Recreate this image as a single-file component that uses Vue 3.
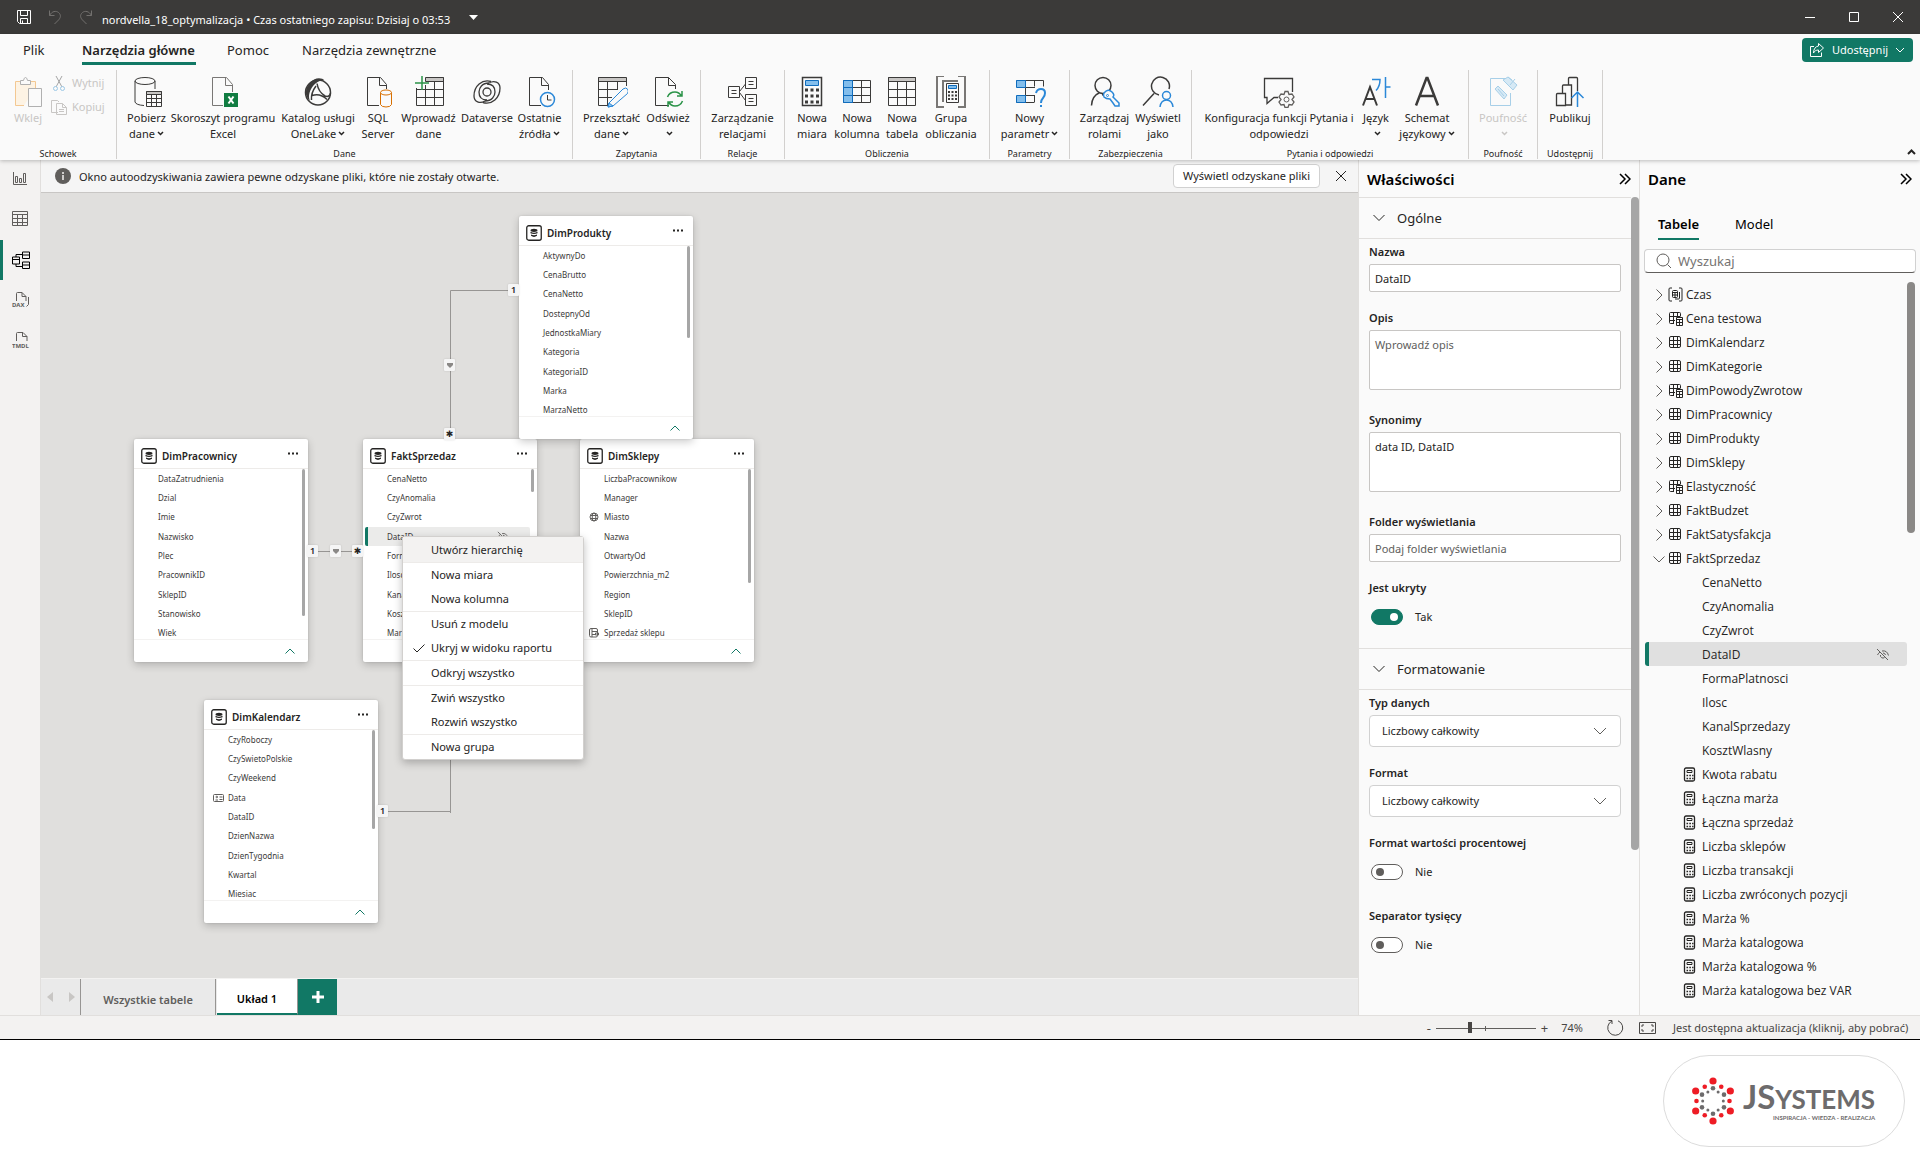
<script setup>
import { ref } from 'vue'

const icons = {
  save: '<path d="M1.5 1.5h13v13h-11l-2-2zM4.5 1.5v5h7v-5M4.5 14.5v-5h7v5M6.5 11.5v3"/>',
  undo: '<path d="M2.500 1.500v5h5M2.500 6.500C5 2 9 1.500 11.500 3.500c3 2.500 2 5.500 0 7.500l-4 4"/>',
  redo: '<path d="M13.500 1.500v5h-5M13.500 6.500C11 2 7 1.500 4.500 3.500c-3 2.500-2 5.500 0 7.500l4 4"/>',
  share: '<path d="M5 4.500H1.500v10h11v-4M9.500 1.500l5 4.500-5 4.500V8C7 8 5.500 9 4.500 11c0-4 2-6.500 5-7z"/>',
  chart: '<path d="M1.500 1v12.500H15M3.500 5.500h2v6h-2zM7.500 7.500h2v4h-2zM11.500 2.500h2v9h-2z"/>',
  grid: '<path d="M.5 .5h15v14H.5zM.5 3.500h15M.5 7.500h15M.5 11.500h15M5.500 3.500v11M10.500 3.500v11"/>',
  model: '<path d="M.5 6h7v7h-7zM.5 8.500h7M10.500 1h7v6.500h-7zM10.500 4h7M10.500 11h7v6.500h-7zM10.500 14h7M4 6V3.500h6.500M4 13v2.500h6.500"/>',
  dax: '<path d="M4.500 10V2.500q0-1 1-1H10l4 4V10M10 1.500v4h4M16.500 6v7.500l-2 2"/><text x="0" y="16">DAX</text>',
  tmdl: '<path d="M4.500 10V2.500q0-1 1-1H11l4 4V10M10.500 1.500v4H15"/><text x="0" y="17">TMDL</text>',
  cut: '<g stroke="#a5a5a5"><path d="M5 1l6 11M11 1L5 12"/></g><g stroke="#9cc8e6"><circle cx="4.500" cy="13.500" r="2"/><circle cx="11.500" cy="13.500" r="2"/></g>',
  copy: '<path d="M7 13.500H.5V1.500h6l1.500 1.500M5.500 4.500h6l4 4v7h-10zM11.500 4.500v4h4M8 10.500h5M8 12.500h5"/>',
  paste: '<g stroke="#f3c892" fill="#fdf3e4"><path d="M12 29.500H3.500V5.500h20V12"/></g><path stroke="#b0b0b0" fill="#fafafa" d="M8.500 8.500v-4h3q.5-3 2-3t2 3h3v4zM16.500 12.500h13v18h-13z"/>',
  database: '<ellipse cx="14" cy="5" rx="10" ry="3.500"/><path d="M4 5v21q1 3 9 3.500M24 5v8"/><path fill="#fafafa" d="M15.500 15.500h15v15h-15z"/><path fill="#c8c6c4" d="M15.500 15.500h15v3h-15z"/><path d="M15.500 22.500h15M15.500 26.500h15M20.500 18.500v12M25.500 18.500v12"/>',
  excel: '<path stroke="#797775" d="M16 29.500H5.500v-28h14l6 7V16M18.500 1.500v8h7"/><path fill="#107c41" stroke="none" d="M17 17h14v14H17z"/><path stroke="#fff" stroke-width="2" d="M21.500 20.500l5 7M26.500 20.500l-5 7"/>',
  onelake: '<circle cx="16" cy="16.500" r="12.500" stroke-width="1.500"/><path fill="#3b3a39" stroke="none" d="M8 7C12 1 20 1 22.500 4.500 18 4 14 6 11 10c-4 5-5 11-3 15C2 20 3 12 8 7z"/><path stroke-width="1.500" d="M15 7.500c1 6 4 10 8 12.500 3 1 5 0 5.500-3M14 10c-3 4-5 9-4.500 14M10 19.500c6-2 11 0 15 4"/>',
  sql: '<path d="M17 29.500H5.500v-28h13l6 7V13M17.500 1.500v8h7"/><g stroke="#d86f00" fill="#fafafa"><path d="M18.500 16.500v12q1 2.500 5.500 2.500t5.500-2.500v-12"/><ellipse cx="24" cy="16.500" rx="5.500" ry="2.500"/></g>',
  enter: '<path fill="#c8c6c4" d="M12.500 1.500h18v4h-18z"/><path d="M3.500 12v17.500h27v-28M4 13.500h26.500M4 21.500h26.500M12.500 9v20.500M21.500 5.500v24"/><path stroke="#2b9348" stroke-width="1.500" d="M9 0v14M2 7h14"/>',
  dataverse: '<g stroke-width="1.300"><circle cx="16" cy="16" r="4"/><path d="M20 5.500C11 3 3 10 3 20c0 6 6 8 11 5M12 26.500C21 29 29 22 29 12c0-6-6-8-11-5M18 7C11 7 8 12 8 16c0 5 3 8 8 8M14 25c7 0 10-5 10-9 0-5-3-8-8-8"/></g>',
  recent: '<path d="M17 29.500H5.500v-28h13l6 7V14M17.500 1.500v8h7"/><g stroke="#2b88d8" fill="#fafafa"><circle cx="23.500" cy="23.500" r="7" stroke-width="1.500"/><path stroke="#3b3a39" d="M23.500 19v5h4"/></g>',
  transform: '<path fill="#c8c6c4" d="M2.500 1.500h28v4h-28z"/><path d="M2.500 1.500v28H14M30.500 5v5M2.500 13.500H22M2.500 21.500H16M11.500 5.500v24M21.500 5.500v8"/><path stroke="#2b88d8" fill="#fafafa" d="M13 27l14-14q3-2 4.500 0t0 4.500L17 30l-5 1z"/><path fill="#8cc4ee" stroke="#2b88d8" d="M13 27l4 3-5 1z"/>',
  refresh: '<path d="M17 29.500H3.500v-28h13l7 7V13M16.500 1.500v8h7"/><path stroke="#2b9348" stroke-width="1.500" d="M15.500 21q2-5 7.500-5 4 0 6.500 4M30 15v5h-5M30.500 25q-2 5-7.500 5-4 0-6.500-4M16 31v-5h5"/>',
  relations: '<path d="M1.500 10.500h11v11h-11zM18.500 1.500h11v11h-11zM18.500 18.500h11v11h-11zM12.500 15.500L18.500 8M12.500 16.500l6 8M4.500 14.500h5M4.500 17.500h5M21.500 5.500h5M21.500 8.500h5M21.500 22.500h5M21.500 25.500h5"/>',
  measure: '<path stroke-width="1.500" d="M6.500 1.500h19v28h-19z"/><path fill="#83beec" stroke="#0f6cbd" d="M9.500 4.500h13v5h-13z"/><path stroke-width="3" stroke-dasharray="3 2.500" d="M9 14h14M9 20h14M9 26h14"/>',
  column: '<path d="M2.500 4.500h27v22h-27zM2.500 11.500h27M2.500 19.500h27M20.500 4.500v22"/><path fill="#83beec" stroke="#0f6cbd" d="M2.500 4.500h9v22h-9zM2.500 11.500h9M2.500 19.500h9"/>',
  table: '<path d="M2.500 1.500h27v28h-27zM2.500 13.500h27M2.500 21.500h27M11.500 5.500v24M20.500 5.500v24"/><path fill="#c8c6c4" d="M2.500 1.500h27v4h-27z"/>',
  calcgroup: '<path stroke-width="2" stroke="#797775" d="M9 0H2v31h7M23 0h7v31h-7"/><path stroke="#797775" stroke-width="2" d="M8 26V5h15"/><path fill="#fafafa" d="M11.500 7.500h12v19h-12z"/><path fill="#83beec" stroke="#0f6cbd" d="M13.500 9.500h8v3h-8z"/><path stroke-width="2" stroke-dasharray="2 1.500" d="M13 16h9M13 19.500h9M13 23h9"/>',
  param: '<path d="M2.500 4.500h27v6M2.500 26.500h18M12 11.500h9M12 19.500h8M11.500 4.500v22M20.500 4.500v6M20.500 19v7"/><path fill="#83beec" stroke="#0f6cbd" d="M2.500 4.500h9v7h-9zM2.500 19.500h9v7h-9z"/><path stroke="#2b88d8" stroke-width="2" d="M22 17q1-4 5-4t4 4q0 3-2 5t-2 5M27 29v2"/>',
  roles: '<circle cx="14" cy="9.500" r="8" stroke-width="1.500"/><path stroke-width="1.500" d="M2.500 29.500Q3 20 10 17M18 17l-5 2"/><path stroke="#2b88d8" fill="#fafafa" stroke-width="1.500" d="M15 17q4-5 8-1 3 3 1 5l6 6v3h-4l-2-3-3-4q-4 0-6-2-1-2 0-4z"/><circle cx="18.500" cy="19.500" r="1" stroke="#2b88d8"/>',
  viewas: '<path stroke-width="1.500" d="M1 29.500l11-12M27 13a9 9 0 1 0-10 6"/><g stroke="#2b88d8" stroke-width="1.500"><circle cx="24.500" cy="19.500" r="4"/><path d="M18 31q1-7 6.500-7t6.500 7"/></g>',
  qa: '<path d="M15 21.500h-4l-7 6v-6H1.500v-19h28V16" stroke-width="1.300"/><path stroke="#605e5c" fill="#fafafa" stroke-width="1.300" d="M22 15.500h3l1 3 3-.5 2 3-2 2.500 2 2.500-2 3-3-.5-1 3h-3l-1-3-3 .5-2-3 2-2.500-2-2.500 2-3 3 .5z"/><circle cx="23.500" cy="23.500" r="2.500" stroke="#605e5c"/>',
  language: '<path stroke-width="2" d="M3 29.500L10 11l7 18.500M5.500 23h9"/><path stroke="#2b88d8" stroke-width="1.500" d="M12 3.500h8q0 7-4 11M25.500 1v21M25.500 11h5"/>',
  schema: '<path stroke-width="2.500" d="M5 29.500L15.500 2h1L27 29.500M8.500 20h15"/>',
  sensitivity: '<g stroke="#a7cfe8"><path d="M18 2.500H3.500v27h20V17"/><path fill="#d6e9f5" d="M8 13l3-3 9 9-3 4zM16 4l5-3 9 8-4 5zM21 1l4 3M28 3l-5 6M11 13l6 7"/></g>',
  publish: '<path d="M2.500 18.500q0-1 1-1h8v12h-9zM8.500 17V10q0-1 1-1h8v20h-6M14.500 9V2.500q0-1 1-1h7q1 0 1 1V15" stroke-width="1.300"/><path stroke="#2b88d8" stroke-width="1.500" d="M23.500 31V16M17.500 22l6-6 6 6"/>',
  tree: '<rect x="1.500" y="1.500" width="11" height="11" rx="1.500"/><path d="M5.500 1.500v11M9.500 1.500v11M1.500 5.500h11M1.500 9.500h11"/>',
  treecalc: '<path d="M6 12.500H2.500q-1 0-1-1v-9q0-1 1-1h9q1 0 1 1V5M5.500 1.500v11M9.500 1.500V5M1.500 5.500h11M1.500 9.500H7"/><path fill="#fafafa" d="M8.500 6.500h6v8h-6z"/><path d="M8.500 8.500h6M8.500 11.500h6M11.500 8.500v6"/>',
  group: '<path d="M4 1H2Q1 1 1 2v11q0 1 1 1h2M11 1h2q1 0 1 1v11q0 1-1 1h-2"/><rect x="4.500" y="3.500" width="5" height="7" rx="1"/><path d="M4.500 5.500h5M4.500 8h5M7 5.500v5M11.500 5v6q0 1-1 1H7"/>',
  calc: '<rect x="1.500" y="1" width="10" height="13" rx="1.500" stroke-width="1.300"/><path d="M4 3.500h5v2H4z"/><path stroke-width="1.600" stroke-dasharray="1.600 1.200" d="M3.500 8.500h7M3.500 11.500h7"/>',
  hidden: '<path d="M1 1l11 11M1.500 7q1-2 2.500-3M6 3q5-1 6.500 4.500M4.500 7a2.500 2.500 0 0 0 4 2.500M7 5q2 0 2.500 2"/>',
  globe: '<circle cx="5" cy="5" r="4"/><path d="M1 3.500h8M1 6.500h8"/><ellipse cx="5" cy="5" rx="1.800" ry="4"/>',
  idcard: '<rect x=".5" y="1.500" width="10" height="7" rx="1"/><path d="M6.500 4h3M6.500 6.500h3M2.500 7h2.500"/><circle cx="3.800" cy="4" r=".8"/>',
  hierarchy: '<rect x=".5" y=".5" width="8" height="8.500" rx="1.500"/><path d="M3 1v8M3 3.500h6M3 6.500h3M6.500 5h3v2h-3z"/>',
}

const groups = [
  { name: 'Dane', width: 456, items: [
    { icon: 'database', a: 'Pobierz', b: 'dane', drop: true, w: 44 },
    { icon: 'excel', a: 'Skoroszyt programu', b: 'Excel', w: 109 },
    { icon: 'onelake', a: 'Katalog usługi', b: 'OneLake', drop: true, w: 81 },
    { icon: 'sql', a: 'SQL', b: 'Server', w: 39 },
    { icon: 'enter', a: 'Wprowadź', b: 'dane', w: 62 },
    { icon: 'dataverse', a: 'Dataverse', b: '', w: 55 },
    { icon: 'recent', a: 'Ostatnie', b: 'źródła', drop: true, w: 50 },
  ] },
  { name: 'Zapytania', width: 128, items: [
    { icon: 'transform', a: 'Przekształć', b: 'dane', drop: true, w: 63 },
    { icon: 'refresh', a: 'Odśwież', b: '', drop: true, w: 50 },
  ] },
  { name: 'Relacje', width: 84, items: [{ icon: 'relations', a: 'Zarządzanie', b: 'relacjami', w: 64 }] },
  { name: 'Obliczenia', width: 205, items: [
    { icon: 'measure', a: 'Nowa', b: 'miara', w: 38 },
    { icon: 'column', a: 'Nowa', b: 'kolumna', w: 52 },
    { icon: 'table', a: 'Nowa', b: 'tabela', w: 38 },
    { icon: 'calcgroup', a: 'Grupa', b: 'obliczania', w: 60 },
  ] },
  { name: 'Parametry', width: 80, items: [{ icon: 'param', a: 'Nowy', b: 'parametr', drop: true, w: 60 }] },
  { name: 'Zabezpieczenia', width: 122, items: [
    { icon: 'roles', a: 'Zarządzaj', b: 'rolami', w: 55 },
    { icon: 'viewas', a: 'Wyświetl', b: 'jako', w: 52 },
  ] },
  { name: 'Pytania i odpowiedzi', width: 277, items: [
    { icon: 'qa', a: 'Konfiguracja funkcji Pytania i', b: 'odpowiedzi', w: 160 },
    { icon: 'language', a: 'Język', b: '', drop: true, w: 34 },
    { icon: 'schema', a: 'Schemat', b: 'językowy', drop: true, w: 68 },
  ] },
  { name: 'Poufność', width: 69, items: [{ icon: 'sensitivity', a: 'Poufność', b: '', drop: true, w: 52, off: true }] },
  { name: 'Udostępnij', width: 65, items: [{ icon: 'publish', a: 'Publikuj', b: '', w: 52 }] },
]

const views = [
  { icon: 'chart', label: 'Widok raportu' },
  { icon: 'grid', label: 'Widok tabeli' },
  { icon: 'model', label: 'Widok modelu' },
  { icon: 'dax', label: 'Widok zapytań DAX' },
  { icon: 'tmdl', label: 'Widok TMDL' },
]

const cards = [
  { name: 'DimPracownicy', x: 94, y: 246, bar: 147, rows: ['DataZatrudnienia', 'Dzial', 'Imie', 'Nazwisko', 'Plec', 'PracownikID', 'SklepID', 'Stanowisko', 'Wiek'] },
  { name: 'FaktSprzedaz', x: 323, y: 246, bar: 23, selected: 'DataID', rows: ['CenaNetto', 'CzyAnomalia', 'CzyZwrot', 'DataID', 'FormaPlatnosci', 'Ilosc', 'KanalSprzedazy', 'KosztWlasny', 'Marza'] },
  { name: 'DimSklepy', x: 540, y: 246, bar: 114, icons: { Miasto: 'globe', 'Sprzedaż sklepu': 'hierarchy' }, rows: ['LiczbaPracownikow', 'Manager', 'Miasto', 'Nazwa', 'OtwartyOd', 'Powierzchnia_m2', 'Region', 'SklepID', 'Sprzedaż sklepu'] },
  { name: 'DimKalendarz', x: 164, y: 507, bar: 99, icons: { Data: 'idcard' }, rows: ['CzyRoboczy', 'CzySwietoPolskie', 'CzyWeekend', 'Data', 'DataID', 'DzienNazwa', 'DzienTygodnia', 'Kwartal', 'Miesiac'] },
  { name: 'DimProdukty', x: 479, y: 23, bar: 92, rows: ['AktywnyDo', 'CenaBrutto', 'CenaNetto', 'DostepnyOd', 'JednostkaMiary', 'Kategoria', 'KategoriaID', 'Marka', 'MarzaNetto'] },
]

const pins = [
  { t: '1', x: 474, y: 97 }, { t: '', x: 410, y: 172 }, { t: '✱', x: 410, y: 241 },
  { t: '1', x: 273, y: 358 }, { t: '', x: 296, y: 358 }, { t: '✱', x: 318, y: 358 },
  { t: '1', x: 343, y: 618 },
]

const menu = [
  ['Utwórz hierarchię'],
  ['Nowa miara', 'Nowa kolumna'],
  ['Usuń z modelu', 'Ukryj w widoku raportu'],
  ['Odkryj wszystko'],
  ['Zwiń wszystko', 'Rozwiń wszystko'],
  ['Nowa grupa'],
]

const tables = [
  ['Czas', 'group'], ['Cena testowa', 'treecalc'], ['DimKalendarz', 'tree'], ['DimKategorie', 'tree'],
  ['DimPowodyZwrotow', 'treecalc'], ['DimPracownicy', 'tree'], ['DimProdukty', 'tree'], ['DimSklepy', 'tree'],
  ['Elastyczność', 'treecalc'], ['FaktBudzet', 'tree'], ['FaktSatysfakcja', 'tree'], ['FaktSprzedaz', 'tree'],
]
const fields = ['CenaNetto', 'CzyAnomalia', 'CzyZwrot', 'DataID', 'FormaPlatnosci', 'Ilosc', 'KanalSprzedazy', 'KosztWlasny']
const measures = ['Kwota rabatu', 'Łączna marża', 'Łączna sprzedaż', 'Liczba sklepów', 'Liczba transakcji', 'Liczba zwróconych pozycji', 'Marża %', 'Marża katalogowa', 'Marża katalogowa %', 'Marża katalogowa bez VAR']

const hex = (r, offset) => Array.from({ length: 6 }, (_, i) => {
  const a = ((i * 60 + offset) * Math.PI) / 180
  return { x: 22 + (r * Math.sin(a)), y: 25 - (r * Math.cos(a)) }
})
const rings = [
  { fill: '#ee1c25', size: 3.6, dots: hex(20, 0) },
  { fill: '#ee1c25', size: 2.3, dots: hex(16.5, 30) },
  { fill: '#6d6b6c', size: 2.3, dots: hex(12.7, 0) },
  { fill: '#6d6b6c', size: 1.5, dots: hex(10.3, 30) },
]

const name = ref('DataID')
const synonyms = ref('data ID, DataID')
const hidden = ref(true)
const zoom = ref(74)
</script>

<template>
  <div class="app">
    <header class="titlebar">
      <button class="plain" aria-label="Zapisz"><svg class="ico" width="16" height="16" viewBox="0 0 16 16" v-html="icons.save" /></button>
      <button class="plain dim" aria-label="Cofnij"><svg class="ico" width="16" height="16" viewBox="0 0 16 16" v-html="icons.undo" /></button>
      <button class="plain dim" aria-label="Ponów"><svg class="ico" width="16" height="16" viewBox="0 0 16 16" v-html="icons.redo" /></button>
      <span class="doc">nordvella_18_optymalizacja • Czas ostatniego zapisu: Dzisiaj o 03:53</span>
      <svg class="caret" width="10" height="5" viewBox="0 0 10 5"><path d="M0 0h9L4.500 5z" fill="#fff" /></svg>
      <div class="window-controls">
        <button class="plain" aria-label="Minimalizuj"><svg class="ico" width="12" height="12" viewBox="0 0 12 12"><path d="M1 6.500h10" /></svg></button>
        <button class="plain" aria-label="Maksymalizuj"><svg class="ico" width="12" height="12" viewBox="0 0 12 12"><path d="M1.500 1.500h9v9h-9z" /></svg></button>
        <button class="plain" aria-label="Zamknij"><svg class="ico" width="12" height="12" viewBox="0 0 12 12"><path d="M1 1l10 10M11 1L1 11" /></svg></button>
      </div>
    </header>

    <section class="ribbon">
      <nav class="ribbon-tabs">
        <a href="#" class="t-file">Plik</a>
        <a href="#" class="t-home on">Narzędzia główne</a>
        <a href="#" class="t-help">Pomoc</a>
        <a href="#">Narzędzia zewnętrzne</a>
        <button class="share">
          <svg class="ico" width="16" height="16" viewBox="0 0 16 16" v-html="icons.share" />
          Udostępnij
          <svg class="ico" width="10" height="6" viewBox="0 0 10 6"><path d="M1 1l4 4 4-4" /></svg>
        </button>
      </nav>
      <div class="ribbon-body">
        <div class="group clip">
          <div class="clip-row">
            <button class="tool off clip-paste"><svg class="ico" width="32" height="32" viewBox="0 0 32 32" v-html="icons.paste" /><span>Wklej</span></button>
            <div class="clip-side">
              <button class="mini"><svg class="ico" width="16" height="16" viewBox="0 0 16 16" v-html="icons.cut" />Wytnij</button>
              <button class="mini"><svg class="ico" width="16" height="16" viewBox="0 0 16 16" v-html="icons.copy" />Kopiuj</button>
            </div>
          </div>
          <div class="group-name">Schowek</div>
        </div>
        <div v-for="g in groups" :key="g.name" class="group" :style="{ width: g.width + 'px' }">
          <div class="tools">
            <button v-for="t in g.items" :key="t.icon" class="tool" :class="{ off: t.off }" :style="{ width: t.w + 'px' }">
              <svg class="ico" width="32" height="32" viewBox="0 0 32 32" v-html="icons[t.icon]" />
              <span>{{ t.a }}</span>
              <span>{{ t.b }}<svg v-if="t.drop" class="drop" width="7" height="5" viewBox="0 0 7 5"><path d="M1 1l2.500 2.500L6 1" /></svg></span>
            </button>
          </div>
          <div class="group-name">{{ g.name }}</div>
        </div>
        <button class="plain collapse" aria-label="Zwiń wstążkę"><svg class="ico" width="9" height="6" viewBox="0 0 9 6"><path stroke-width="2" d="M1 5l3.500-3.500L8 5" /></svg></button>
      </div>
    </section>

    <main class="main">
      <nav class="views">
        <button v-for="v in views" :key="v.icon" class="plain view" :class="{ active: v.icon === 'model' }" :aria-label="v.label">
          <svg class="ico" width="18" height="18" viewBox="0 0 18 18" v-html="icons[v.icon]" />
        </button>
      </nav>

      <section class="work">
        <div class="notice">
          <svg width="16" height="16" viewBox="0 0 16 16"><circle cx="8" cy="8" r="8" fill="#605e5c" /><path d="M8 4v2M8 7v5" stroke="#f3f2f1" stroke-width="1.500" /></svg>
          <span class="notice-text">Okno autoodzyskiwania zawiera pewne odzyskane pliki, które nie zostały otwarte.</span>
          <button class="outline">Wyświetl odzyskane pliki</button>
          <button class="plain" aria-label="Zamknij powiadomienie"><svg class="ico" width="10" height="10" viewBox="0 0 10 10"><path d="M0 0l10 10M10 0L0 10" /></svg></button>
        </div>

        <div class="canvas">
          <svg class="links" width="760" height="780" viewBox="0 0 760 780"><path d="M479 97.500h-68.500V620M268 358.500h55M338 618.500h72.500V480" /></svg>
          <article v-for="c in cards" :key="c.name" class="card" :style="{ left: c.x + 'px', top: c.y + 'px' }">
            <header class="card-head">
              <svg width="16" height="16" viewBox="0 0 16 16"><rect x=".75" y=".75" width="14.500" height="14.500" rx="2" fill="#fff" stroke="#252423" stroke-width="1.300" /><ellipse cx="8" cy="5.300" rx="3.500" ry="1.600" fill="#252423" /><path d="M4.500 6.800q3.500 1.800 7 0v1.400q-3.500 1.600-7 0zM5 9.600q3 1.200 6 0v1.200q-3 2.200-6 0z" fill="#252423" /></svg>
              <h3>{{ c.name }}</h3>
              <button class="plain" aria-label="Więcej opcji"><svg width="10" height="3" viewBox="0 0 10 3"><path d="M0 .5h2v2H0zM4 .5h2v2H4zM8 .5h2v2H8z" fill="#252423" /></svg></button>
            </header>
            <div class="card-body">
              <ul>
                <li v-for="r in c.rows" :key="r" :class="{ sel: r === c.selected }">
                  <span class="mark"><svg v-if="c.icons && c.icons[r]" class="ico" width="11" height="10" viewBox="0 0 11 10" v-html="icons[c.icons[r]]" /></span>{{ r }}
                  <svg v-if="r === c.selected" class="ico eye" width="11" height="11" viewBox="0 0 13 13" v-html="icons.hidden" />
                </li>
              </ul>
              <span class="thumb" :style="{ height: c.bar + 'px' }"></span>
            </div>
            <footer class="card-foot"><button class="plain" aria-label="Zwiń tabelę"><svg class="ico" width="10" height="6" viewBox="0 0 10 6"><path d="M.5 5.500L5 1l4.500 4.500" /></svg></button></footer>
          </article>
          <span v-for="(p, i) in pins" :key="i" class="pin" :style="{ left: p.x + 'px', top: p.y + 'px' }">
            <template v-if="p.t">{{ p.t }}</template>
            <svg v-else width="6" height="5" viewBox="0 0 6 5"><path d="M0 0h6v2L3 5 0 2z" fill="#8a8886" /></svg>
          </span>

          <div class="menu" role="menu">
            <div v-for="(part, i) in menu" :key="i" class="menu-part">
              <button v-for="m in part" :key="m" role="menuitem" :class="{ hot: m === 'Utwórz hierarchię' }">
                <span class="tick"><svg v-if="m.startsWith('Ukryj')" class="ico" width="12" height="9" viewBox="0 0 12 9"><path d="M.5 4.500L4 8l7.500-7.500" /></svg></span>{{ m }}
              </button>
            </div>
          </div>
        </div>

        <div class="sheets">
          <div class="arrows">
            <button class="plain" aria-label="Poprzedni układ"><svg width="6" height="10" viewBox="0 0 6 10"><path d="M6 0v10L0 5z" fill="#c8c6c4" /></svg></button>
            <button class="plain" aria-label="Następny układ"><svg width="6" height="10" viewBox="0 0 6 10"><path d="M0 0v10l6-5z" fill="#c8c6c4" /></svg></button>
          </div>
          <button class="sheet">Wszystkie tabele</button>
          <button class="sheet current">Układ 1</button>
          <button class="add" aria-label="Nowy układ"><svg width="12" height="12" viewBox="0 0 12 12"><path d="M6 0v12M0 6h12" stroke="#fff" stroke-width="3" /></svg></button>
        </div>
      </section>

      <aside class="props">
        <div class="pane-head"><h2>Właściwości</h2><button class="plain" aria-label="Zwiń okienko"><svg class="ico" width="12" height="12" viewBox="0 0 12 12"><path stroke-width="1.500" d="M1 1l5 5-5 5M6 1l5 5-5 5" /></svg></button></div>
        <div class="props-scroll">
          <div class="props-form">
            <h3 class="sec"><svg class="ico" width="12" height="8" viewBox="0 0 12 8"><path d="M.5 1L6 6.500 11.500 1" /></svg>Ogólne</h3>
            <div class="fields">
              <div class="field"><label for="f-name">Nazwa</label><input id="f-name" v-model="name" type="text"></div>
              <div class="field"><label for="f-desc">Opis</label><textarea id="f-desc" placeholder="Wprowadź opis"></textarea></div>
              <div class="field"><label for="f-syn">Synonimy</label><textarea id="f-syn" v-model="synonyms"></textarea></div>
              <div class="field"><label for="f-dir">Folder wyświetlania</label><input id="f-dir" type="text" placeholder="Podaj folder wyświetlania"></div>
              <div class="field"><label for="f-hid">Jest ukryty</label><div class="switch"><input id="f-hid" v-model="hidden" type="checkbox"><span>Tak</span></div></div>
            </div>
            <h3 class="sec second"><svg class="ico" width="12" height="8" viewBox="0 0 12 8"><path d="M.5 1L6 6.500 11.500 1" /></svg>Formatowanie</h3>
            <div class="fields">
              <div class="field"><label for="f-type">Typ danych</label><div class="select"><select id="f-type"><option>Liczbowy całkowity</option></select><svg class="ico" width="14" height="8" viewBox="0 0 14 8"><path d="M1 1l6 6 6-6" /></svg></div></div>
              <div class="field"><label for="f-fmt">Format</label><div class="select"><select id="f-fmt"><option>Liczbowy całkowity</option></select><svg class="ico" width="14" height="8" viewBox="0 0 14 8"><path d="M1 1l6 6 6-6" /></svg></div></div>
              <div class="field toggle"><label for="f-pct">Format wartości procentowej</label><div class="switch"><input id="f-pct" type="checkbox"><span>Nie</span></div></div>
              <div class="field toggle"><label for="f-sep">Separator tysięcy</label><div class="switch"><input id="f-sep" type="checkbox"><span>Nie</span></div></div>
            </div>
          </div>
          <div class="rail"></div>
        </div>
      </aside>

      <aside class="data">
        <div class="pane-head"><h2>Dane</h2><button class="plain" aria-label="Zwiń okienko"><svg class="ico" width="12" height="12" viewBox="0 0 12 12"><path stroke-width="1.500" d="M1 1l5 5-5 5M6 1l5 5-5 5" /></svg></button></div>
        <div class="data-tabs"><button class="on">Tabele</button><button>Model</button></div>
        <div class="search">
          <svg class="ico" width="16" height="16" viewBox="0 0 16 16"><circle cx="7" cy="7" r="6" /><path d="M11.500 11.500L15 15" /></svg>
          <input type="search" placeholder="Wyszukaj" aria-label="Wyszukaj">
        </div>
        <div class="tree-wrap">
          <ul class="tree">
            <li v-for="t in tables" :key="t[0]" class="node">
              <svg class="ico chev" width="12" height="12" viewBox="0 0 12 12"><path :d="t[0] === 'FaktSprzedaz' ? 'M.5 3.500L6 9l5.500-5.500' : 'M3.500 .5L9 6l-5.500 5.500'" /></svg>
              <svg class="ico" width="15" height="15" viewBox="0 0 15 15" v-html="icons[t[1]]" />{{ t[0] }}
            </li>
            <li v-for="f in fields" :key="f" class="leaf" :class="{ sel: f === 'DataID' }">
              <span class="slot"></span>{{ f }}
              <svg v-if="f === 'DataID'" class="ico eye" width="13" height="13" viewBox="0 0 13 13" v-html="icons.hidden" />
            </li>
            <li v-for="m in measures" :key="m" class="leaf">
              <span class="slot"><svg class="ico" width="13" height="15" viewBox="0 0 13 15" v-html="icons.calc" /></span>{{ m }}
            </li>
          </ul>
          <div class="tree-rail"></div>
        </div>
      </aside>
    </main>

    <footer class="status">
      <div class="zoomer"><span>-</span><input v-model="zoom" type="range" min="40" max="140" aria-label="Powiększenie"><span>+</span></div>
      <span class="pct">74%</span>
      <svg class="ico" width="18" height="18" viewBox="0 0 18 18"><path d="M6 2a7.500 7.500 0 1 0 6-.2M2.500 1.500H6V5" /></svg>
      <svg class="ico fit" width="17" height="12" viewBox="0 0 17 12"><path d="M.5 .5h16v11H.5zM3 5V3h2M12 3h2v2M3 7v2h2M12 9h2V7" /></svg>
      <a href="#">Jest dostępna aktualizacja (kliknij, aby pobrać)</a>
    </footer>

    <div class="brand-row">
      <div class="brand">
        <svg width="44" height="50" viewBox="0 0 44 50">
          <g v-for="(r, i) in rings" :key="i" :fill="r.fill"><circle v-for="(d, j) in r.dots" :key="j" :cx="d.x" :cy="d.y" :r="r.size" /></g>
        </svg>
        <div class="brand-text"><div class="word">JS<span>YSTEMS</span></div><div class="tag">INSPIRACJA - WIEDZA - REALIZACJA</div></div>
      </div>
    </div>
  </div>
</template>

<style>
body { background: #fff; }
</style>

<style scoped>
.app { font-family: "Noto Sans", "Open Sans", sans-serif; font-size: 11px; line-height: 16px; color: #252423; }
.app * { box-sizing: border-box; }
button, input, textarea, select { font: inherit; color: inherit; }
button { padding: 0; border: 0; background: none; white-space: nowrap; }
h2, h3, ul { margin: 0; padding: 0; list-style: none; }
a { color: inherit; text-decoration: none; }
.plain { display: flex; align-items: center; justify-content: center; }
.ico { fill: none; stroke: currentColor; flex: none; }
svg { flex: none; }

.titlebar { display: flex; align-items: center; height: 34px; padding: 0 16px; gap: 15px; background: #3b3a39; color: #fff; }
.titlebar .dim { color: #72706e; }
.doc { min-width: 360px; margin-left: -7px; padding-top: 6px; white-space: nowrap; }
.caret { margin-left: -8px; }
.window-controls { display: flex; margin-left: auto; gap: 32px; }

.ribbon { position: relative; background: #fafafa; box-shadow: 0 1px 4px rgba(0, 0, 0, .25); z-index: 2; }
.ribbon-tabs { display: flex; align-items: flex-start; height: 36px; padding: 4px 7px 0 23px; font-size: 13px; line-height: 24px; white-space: nowrap; }
.ribbon-tabs a { height: 27px; }
.t-file { width: 59px; }
.t-home { min-width: 114px; margin-right: 31px; }
.t-help { width: 75px; }
.ribbon-tabs .on { border-bottom: 3px solid #117865; font-weight: 600; }
.share { display: flex; align-items: center; justify-content: space-between; width: 111px; height: 24px; margin-left: auto; padding: 0 8px 0 7px; border-radius: 4px; background: #117865; color: #fff; font-size: 11px; }
.ribbon-body { display: flex; height: 90px; }
.group { display: flex; flex-direction: column; justify-content: space-between; height: 90px; flex: none; border-style: solid; border-width: 0 1px 0 0; border-image: linear-gradient(#d2d0ce 88px, transparent 88px) 1; }
.group-name { font-size: 9px; line-height: 12px; text-align: center; white-space: nowrap; }
.tools { display: flex; justify-content: center; padding-top: 6px; }
.tool { display: flex; flex-direction: column; align-items: center; height: 70px; }
.tool .ico { margin-bottom: 2px; color: #3b3a39; }
.tool span { height: 16px; }
.tool.off { color: #c8c6c4; }
.drop { margin: 0 0 2px 2px; fill: none; stroke: currentColor; stroke-width: 1.5; }
.clip { width: 117px; }
.clip-row { display: flex; padding: 6px 0 0 12px; gap: 7px; }
.clip-paste { width: 32px; }
.clip-side { display: flex; flex-direction: column; gap: 10px; }
.mini { display: flex; align-items: center; height: 14px; gap: 5px; color: #c8c6c4; }
.collapse { margin: auto 4px 5px auto; }

.main { display: flex; }
.views { width: 41px; flex: none; background: #f3f2f1; border-right: 1px solid #e1dfdd; color: #605e5c; }
.view { width: 40px; height: 40px; padding-right: 2px; border-left: 3px solid transparent; }
.view.active { border-left-color: #117865; color: #000; }
.view :deep(text) { font: 700 6px "Noto Sans", sans-serif; fill: currentColor; stroke: none; }

.work { display: flex; flex-direction: column; flex: 1; min-width: 0; }
.notice { display: flex; align-items: center; height: 33px; padding: 0 12px 0 14px; gap: 8px; background: #f5f5f5; border-bottom: 1px solid #c8c6c4; white-space: nowrap; }
.notice-text { padding-top: 2px; }
.outline { height: 24px; margin: 0 8px 0 auto; padding: 0 9px; border: 1px solid #d1d1d1; border-radius: 4px; background: #fff; }
.canvas { position: relative; flex: 1; overflow: hidden; background: #e0dfdd; margin-left: -1px; }
.links { position: absolute; left: 0; top: 0; fill: none; stroke: #979593; }
.card { position: absolute; width: 174px; height: 223px; background: #fff; border-radius: 2px; box-shadow: 0 3px 8px rgba(0, 0, 0, .2), 0 0 2px rgba(0, 0, 0, .15); }
.card-head { display: flex; align-items: center; height: 30px; padding: 5px 10px 0 7px; border-bottom: 1px solid #edebe9; }
.card-head h3 { flex: 1; margin-left: 5px; font-size: 10px; font-weight: 600; line-height: 16px; }
.card-head button { margin-bottom: 5px; }
.card-body { position: relative; height: 171px; overflow: hidden; border-bottom: 1px solid #f3f2f1; }
.card-body ul { display: grid; grid-template-rows: repeat(9, 1fr); height: 174px; margin-right: 7px; }
.card-body li { display: flex; align-items: center; margin-left: 2px; font-size: 8px; line-height: 10px; color: #3b3a39; }
.card-body .sel { background: #ebebea; border-left: 3px solid #117865; border-radius: 2px; }
.card-body .sel .mark { width: 19px; }
.mark { display: flex; width: 22px; padding-left: 7px; color: #605e5c; }
.eye { margin-left: auto; margin-right: 22px; color: #605e5c; }
.thumb { position: absolute; right: 3px; top: 0; width: 3px; border-radius: 2px; background: #a6a6a6; }
.card-foot { display: flex; justify-content: flex-end; height: 22px; padding-right: 13px; color: #117865; }
.pin { position: absolute; display: flex; align-items: center; justify-content: center; width: 11px; height: 12px; margin: -6px 0 0 -6px; background: #f5f5f5; border-radius: 1px; font: 600 9px/12px "Noto Sans", "DejaVu Sans", sans-serif; box-shadow: 0 0 2px rgba(0, 0, 0, .15); }
.menu { position: absolute; left: 362px; top: 343px; width: 182px; background: #fff; border: 1px solid #d2d0ce; border-radius: 3px; box-shadow: 0 3px 8px rgba(0, 0, 0, .25); }
.menu-part + .menu-part { border-top: 1px solid #edebe9; }
.menu button { display: flex; align-items: center; width: 100%; height: 24px; }
.menu .menu-part:first-child button { height: 25px; }
.menu .hot { background: #f3f2f1; }
.tick { display: flex; width: 28px; padding-left: 10px; }
.sheets { display: flex; height: 37px; background: #eaeaea; border-top: 1px solid #f3f2f1; font-weight: 600; }
.arrows { display: flex; width: 40px; align-items: center; justify-content: space-between; padding: 0 5px 0 6px; border-right: 1px solid #979593; }
.sheet { width: 135px; padding-top: 5px; border-right: 1px solid #979593; color: #605e5c; }
.sheet.current { width: 81px; margin-left: 1px; background: #fff; border-bottom: 2px solid #117865; color: #000; }
.add { display: flex; align-items: center; justify-content: center; width: 39px; background: #117865; }

.pane-head { display: flex; align-items: center; justify-content: space-between; height: 37px; padding: 0 8px; color: #000; }
.pane-head h2 { font-size: 15px; font-weight: 600; line-height: 20px; }
.props { width: 282px; flex: none; background: #fafafa; border-left: 1px solid #e1dfdd; border-right: 1px solid #e1dfdd; }
.props-scroll { display: flex; }
.props-form { flex: 1; }
.sec { display: flex; align-items: center; height: 42px; padding-left: 14px; gap: 12px; border-top: 1px solid #e1dfdd; border-bottom: 1px solid #e1dfdd; font-size: 13px; font-weight: 400; }
.sec.second { margin-top: 23px; }
.fields { display: flex; flex-direction: column; gap: 18px; padding: 5px 9px 0 10px; }
.field { display: flex; flex-direction: column; }
.field label { margin-bottom: 4px; font-weight: 600; }
.field input[type="text"], .field textarea { width: 252px; padding: 0 5px; border: 1px solid #c8c6c4; border-radius: 2px; background: #fff; outline: 0; }
.field input[type="text"] { height: 28px; }
.field textarea { display: block; height: 60px; margin-bottom: 4px; padding-top: 6px; resize: none; }
.field ::placeholder { color: #605e5c; opacity: 1; }
.toggle + .toggle { margin-top: 10px; }
.switch { display: flex; align-items: center; gap: 12px; padding: 9px 2px 0; }
.switch input { appearance: none; display: flex; align-items: center; width: 32px; height: 16px; margin: 0; padding: 0 4px; border: 1px solid #605e5c; border-radius: 8px; background: #fff; }
.switch input::before { content: ""; width: 8px; height: 8px; border-radius: 50%; background: #605e5c; }
.switch input:checked { justify-content: flex-end; border-color: #117865; background: #117865; }
.switch input:checked::before { background: #fff; }
.select { display: flex; align-items: center; width: 252px; height: 32px; padding-right: 13px; border: 1px solid #d1d1d1; border-radius: 4px; background: #fff; color: #252423; }
.select select { flex: 1; appearance: none; padding: 0 12px; border: 0; background: none; }
.select .ico { color: #605e5c; }
.rail { width: 8px; height: 653px; border-radius: 4px; background: #a6a6a6; }

.data { display: flex; flex-direction: column; width: 280px; flex: none; background: #fafafa; }
.data-tabs { display: flex; gap: 36px; height: 52px; padding: 13px 18px 9px; font-size: 13px; color: #000; }
.data-tabs button { height: 30px; border-bottom: 2px solid transparent; }
.data-tabs .on { border-bottom-color: #117865; font-weight: 600; }
.search { display: flex; align-items: center; height: 24px; margin: 0 4px; padding-left: 11px; gap: 6px; border: 1px solid #d1d1d1; border-bottom-color: #605e5c; border-radius: 4px; background: #fff; color: #605e5c; }
.search input { flex: 1; min-width: 0; padding: 0; border: 0; outline: 0; background: none; font-size: 13px; }
.search ::placeholder { color: #757371; opacity: 1; }
.tree-wrap { display: flex; padding: 9px 5px 13px; }
.tree { flex: 1; font-family: "Open Sans", "Noto Sans", sans-serif; }
.tree li { display: flex; align-items: center; height: 24px; padding-top: 1px; font-size: 12px; }
.tree .node { padding-left: 8px; gap: 3px; }
.node .chev { color: #605e5c; }
.slot { display: flex; width: 57px; padding-left: 38px; }
.leaf.sel { border-left: 4px solid #117865; border-radius: 3px; background: #e0e0e0; }
.leaf.sel .slot { width: 53px; }
.leaf .eye { margin-right: 18px; }
.tree-rail { width: 8px; height: 251px; border-radius: 4px; background: #8a8886; }

.status { display: flex; align-items: center; justify-content: flex-end; height: 25px; padding-right: 4px; background: #f3f2f1; border-top: 1px solid #e1dfdd; border-bottom: 1px solid #000; color: #484644; white-space: nowrap; }
.status a { min-width: 243px; }
.zoomer { display: flex; align-items: center; gap: 5px; font-size: 13px; }
.zoomer input { appearance: none; width: 100px; height: 12px; margin: 0; background: linear-gradient(#605e5c, #605e5c) 0 6px / 100% 1px no-repeat, linear-gradient(#605e5c, #605e5c) 49px 4px / 1px 5px no-repeat; }
.zoomer input::-webkit-slider-thumb { appearance: none; width: 4px; height: 11px; background: #484644; }
.pct { margin: 0 23px 0 13px; }
.fit { margin: 0 17px 0 15px; }

.brand-row { display: flex; justify-content: flex-end; padding: 15px 15px; }
.brand { display: flex; align-items: center; width: 242px; height: 92px; padding-left: 27px; border: 1px solid #dcdcdc; border-radius: 46px; color: #6d6b6c; font-family: Lato, sans-serif; }
.brand-text { margin-left: 8px; }
.word { font-size: 33px; line-height: 30px; font-weight: 700; }
.word span { font-size: 26px; }
.tag { font-size: 6px; line-height: 8px; font-weight: 700; text-align: right; }
</style>
